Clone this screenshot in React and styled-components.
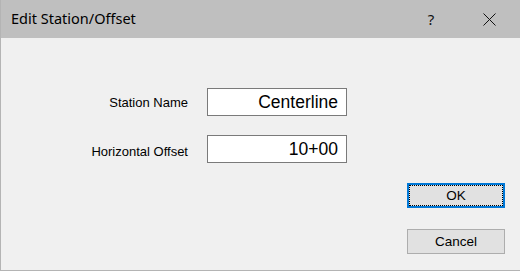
import React from "react";
import styled, { createGlobalStyle } from "styled-components";

const Global = createGlobalStyle`
  html, body { margin: 0; padding: 0; }
  body { width: 520px; height: 271px; overflow: hidden; background: #f0f0f0; }
  * { box-sizing: border-box; }
`;

const Window = styled.div`
  width: 520px;
  height: 271px;
  display: flex;
  flex-direction: column;
  background: #f0f0f0;
  border-left: 1px solid #b4b4b4;
  border-bottom: 1px solid #b4b4b4;
  font-family: "Liberation Sans", Arial, sans-serif;
`;

const TitleBar = styled.div`
  height: 38px;
  flex: 0 0 38px;
  background: #bfbfbf;
  display: flex;
  align-items: center;
  padding-left: 10px;
`;

const Title = styled.div`
  flex: 1;
  font-family: "Noto Sans", "Open Sans", sans-serif;
  font-size: 14.5px;
  color: #000;
  padding-bottom: 2px;
`;

const TitleButton = styled.div`
  width: ${(p) => p.$w}px;
  height: 38px;
  display: flex;
  align-items: center;
  justify-content: center;
  font-family: "Noto Sans", sans-serif;
  font-size: 15px;
  color: #111;
`;

const Body = styled.div`
  flex: 1;
  display: flex;
  flex-direction: column;
  padding: 50px 15px 0 0;
`;

const Form = styled.div`
  display: grid;
  grid-template-columns: 187px 140px;
  grid-auto-rows: 28px;
  column-gap: 19px;
  row-gap: 19px;
  align-items: center;
`;

const Label = styled.label`
  justify-self: end;
  font-size: 13px;
  color: #000;
  padding-top: ${(p) => p.$nudge || 0}px;
`;

const Field = styled.div`
  height: 28px;
  background: #fff;
  border: 1px solid #7a7a7a;
  display: flex;
  align-items: center;
  justify-content: flex-end;
  padding-right: 8px;
  font-size: 17.5px;
  color: #000;
`;

const Buttons = styled.div`
  align-self: flex-end;
  margin-top: 20px;
  display: flex;
  flex-direction: column;
  gap: 21px;
`;

const Button = styled.button`
  position: relative;
  width: 98px;
  height: 25px;
  margin: 0;
  padding: 0;
  background: #e1e1e1;
  border: ${(p) => (p.$default ? "2px solid #0078d7" : "1px solid #adadad")};
  font-family: "Liberation Sans", Arial, sans-serif;
  font-size: 13.5px;
  color: #000;
  display: flex;
  align-items: center;
  justify-content: center;
  &::after {
    content: "";
    display: ${(p) => (p.$default ? "block" : "none")};
    position: absolute;
    inset: 0;
    border: 1px dotted #000;
  }
`;

export default function App() {
  return (
    <>
      <Global />
      <Window>
        <TitleBar>
          <Title>Edit Station/Offset</Title>
          <TitleButton $w={54}>?</TitleButton>
          <TitleButton $w={62}>
            <svg width="13" height="13" viewBox="0 0 13 13">
              <path d="M0.5 0.5 L12.5 12.5 M12.5 0.5 L0.5 12.5" stroke="#111" strokeWidth="1" fill="none" />
            </svg>
          </TitleButton>
        </TitleBar>
        <Body>
          <Form>
            <Label>Station Name</Label>
            <Field>Centerline</Field>
            <Label $nudge={4}>Horizontal Offset</Label>
            <Field>10+00</Field>
          </Form>
          <Buttons>
            <Button $default>OK</Button>
            <Button>Cancel</Button>
          </Buttons>
        </Body>
      </Window>
    </>
  );
}
